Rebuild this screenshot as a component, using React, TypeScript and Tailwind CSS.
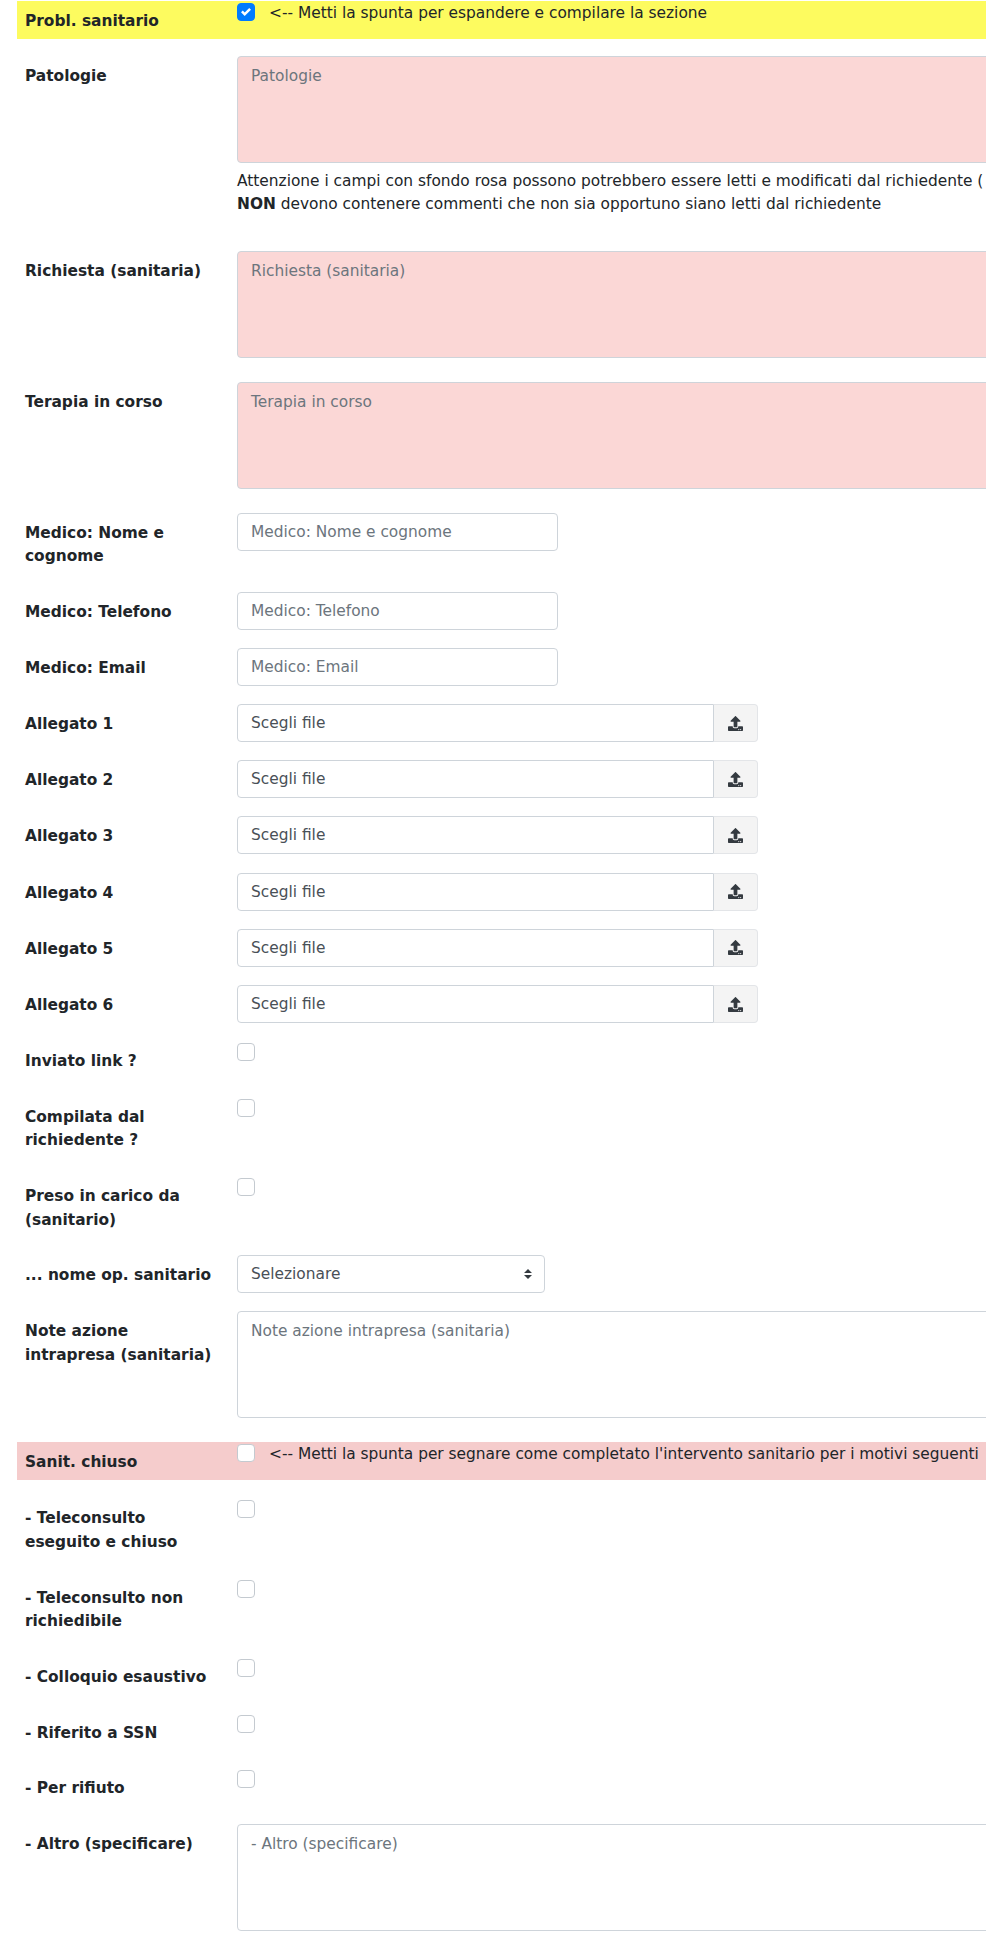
import React from 'react';
import { FaUpload } from 'react-icons/fa';

const labelClass = 'w-[220px] shrink-0 pl-2 pr-5 pt-[9px] pb-[5px] font-bold text-[#212529] leading-[23.5px]';
const inputClass = 'h-[38px] rounded-[4px] border border-[#ced4da] bg-white px-[13px] text-[#495057] placeholder:text-[#6c757d] outline-none';

const Row = ({ label, mb = 'mb-[18.2px]', children }: { label: string; mb?: string; children: React.ReactNode }) => (
  <div className={`flex ${mb}`}>
    <div className={labelClass}>{label}</div>
    <div className="min-w-0 flex-1">{children}</div>
  </div>
);

const Check = ({ checked = false }: { checked?: boolean }) => (
  <span
    className={`flex h-[18px] w-[18px] shrink-0 items-center justify-center rounded-[4px] border ${
      checked ? 'border-[#007bff] bg-[#007bff]' : 'border-[#c4cad0] bg-white'
    }`}
  >
    {checked && (
      <svg viewBox="0 0 8 8" className="h-[10px] w-[10px]">
        <path fill="#fff" d="M6.564.75l-3.59 3.612-1.538-1.55L0 4.26l2.974 2.99L8 2.193z" />
      </svg>
    )}
  </span>
);

const CheckRow = ({ label }: { label: string }) => (
  <Row label={label}>
    <div className="pt-[2px]">
      <Check />
    </div>
  </Row>
);

const Area = ({ placeholder, pink = false }: { placeholder: string; pink?: boolean }) => (
  <textarea
    placeholder={placeholder}
    className={`block h-[107px] w-[800px] resize-none rounded-[4px] border border-[#ced4da] px-[13px] py-[8px] leading-[23.5px] placeholder:text-[#6c757d] outline-none ${
      pink ? 'bg-[#fbd7d6]' : 'bg-white'
    }`}
  />
);

const TextRow = ({ label }: { label: string }) => (
  <Row label={label}>
    <input placeholder={label} className={`${inputClass} block w-[321px]`} />
  </Row>
);

const FileRow = ({ label }: { label: string }) => (
  <Row label={label}>
    <div className="flex h-[38px] w-[521px]">
      <div className="flex flex-1 items-center rounded-l-[4px] border border-[#ced4da] bg-white px-[13px] pt-px text-[#495057]">
        Scegli file
      </div>
      <div className="flex w-[44px] items-center justify-center rounded-r-[4px] border border-l-0 border-[#e3e5e8] bg-[#f4f4f4] text-[#343a40]">
        <FaUpload size={15} />
      </div>
    </div>
  </Row>
);

const Band = ({ label, color, checked, text, mb }: { label: string; color: string; checked?: boolean; text: string; mb: string }) => (
  <div className={`flex h-[38px] ${color} ${mb}`}>
    <div className={labelClass}>{label}</div>
    <div className="flex min-w-0 flex-1 items-start gap-[14px] pt-[2px]">
      <Check checked={checked} />
      <span className="whitespace-nowrap leading-[20px] text-[#212529]">{text}</span>
    </div>
  </div>
);

export default function App() {
  return (
    <div className="h-[1953px] w-[986px] overflow-hidden bg-white pl-[17px] pt-px font-['DejaVu_Sans',sans-serif] text-[15.4px] text-[#212529]">
      <Band
        label="Probl. sanitario"
        color="bg-[#fdfb5f]"
        checked
        text="<-- Metti la spunta per espandere e compilare la sezione"
        mb="mb-[17px]"
      />

      <Row label="Patologie" mb="mb-[34.5px]">
        <Area placeholder="Patologie" pink />
        <div className="mt-[7px] whitespace-nowrap leading-[23px]">
          <div>Attenzione i campi con sfondo rosa possono potrebbero essere letti e modificati dal richiedente (</div>
          <div>
            <b>NON</b> devono contenere commenti che non sia opportuno siano letti dal richiedente
          </div>
        </div>
      </Row>
      <Row label="Richiesta (sanitaria)" mb="mb-[24px]">
        <Area placeholder="Richiesta (sanitaria)" pink />
      </Row>
      <Row label="Terapia in corso" mb="mb-[24px]">
        <Area placeholder="Terapia in corso" pink />
      </Row>

      <TextRow label="Medico: Nome e cognome" />
      <TextRow label="Medico: Telefono" />
      <TextRow label="Medico: Email" />

      {[1, 2, 3, 4, 5, 6].map((n) => (
        <FileRow key={n} label={`Allegato ${n}`} />
      ))}

      <CheckRow label="Inviato link ?" />
      <CheckRow label="Compilata dal richiedente ?" />
      <CheckRow label="Preso in carico da (sanitario)" />

      <Row label="... nome op. sanitario">
        <div className="flex h-[38px] w-[308px] items-center justify-between rounded-[4px] border border-[#ced4da] bg-white pl-[13px] pr-[12px] text-[#495057]">
          Selezionare
          <svg viewBox="0 0 4 5" className="h-[10px] w-[8px]">
            <path fill="#343a40" d="M2 0L0 2h4zm0 5L0 3h4z" />
          </svg>
        </div>
      </Row>
      <Row label="Note azione intrapresa (sanitaria)" mb="mb-[24px]">
        <Area placeholder="Note azione intrapresa (sanitaria)" />
      </Row>

      <Band
        label="Sanit. chiuso"
        color="bg-[#f5cccc]"
        text="<-- Metti la spunta per segnare come completato l'intervento sanitario per i motivi seguenti"
        mb="mb-[18px]"
      />

      <CheckRow label="- Teleconsulto eseguito e chiuso" />
      <CheckRow label="- Teleconsulto non richiedibile" />
      <CheckRow label="- Colloquio esaustivo" />
      <CheckRow label="- Riferito a SSN" />
      <CheckRow label="- Per rifiuto" />
      <Row label="- Altro (specificare)">
        <Area placeholder="- Altro (specificare)" />
      </Row>
    </div>
  );
}
